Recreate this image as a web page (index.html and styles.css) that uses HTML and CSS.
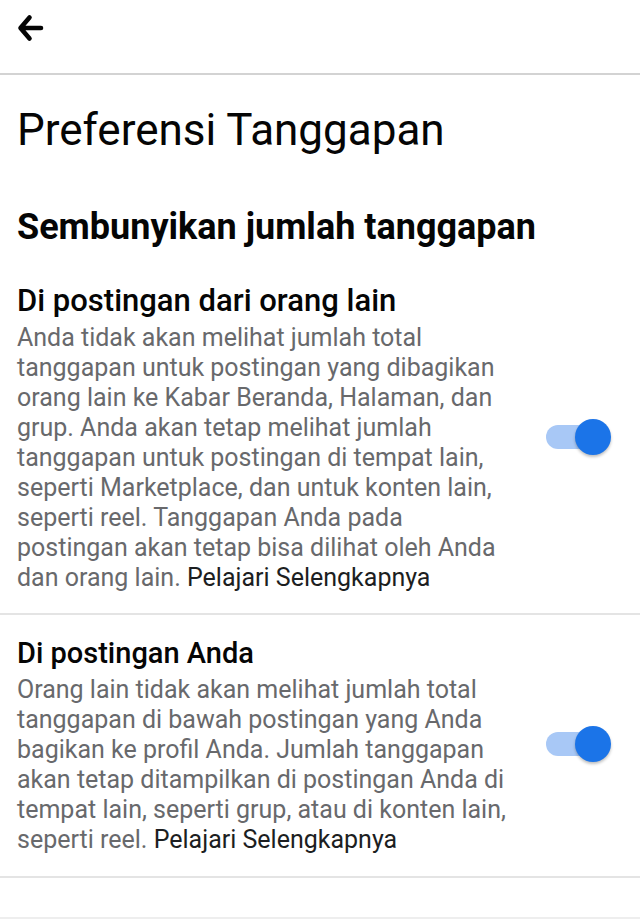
FILE: index.html
```html
<!DOCTYPE html>
<html lang="id">
<head>
<meta charset="utf-8">
<title>Preferensi Tanggapan</title>
<link rel="stylesheet" href="styles.css">
</head>
<body>
<header class="topbar">
  <button class="back" aria-label="Kembali">
    <svg width="30" height="30" viewBox="0 0 30 30"><path d="M25 14 H6 M13.5 3.5 L4.5 14 L13.5 24.5" fill="none" stroke="#050505" stroke-width="4.6" stroke-linecap="round" stroke-linejoin="round"/></svg>
  </button>
</header>
<main class="content">
  <h1 class="title">Preferensi Tanggapan</h1>
  <h2 class="subtitle">Sembunyikan jumlah tanggapan</h2>
  <section class="item item-first">
    <div class="item-text">
      <h3 class="item-head">Di postingan dari orang lain</h3>
      <p class="item-desc">Anda tidak akan melihat jumlah total<br>tanggapan untuk postingan yang dibagikan<br>orang lain ke Kabar Beranda, Halaman, dan<br>grup. Anda akan tetap melihat jumlah<br>tanggapan untuk postingan di tempat lain,<br>seperti Marketplace, dan untuk konten lain,<br>seperti reel. Tanggapan Anda pada<br>postingan akan tetap bisa dilihat oleh Anda<br>dan orang lain. <a class="more" href="#">Pelajari Selengkapnya</a></p>
    </div>
    <span class="toggle"><span class="knob"></span></span>
  </section>
  <section class="item item-second">
    <div class="item-text">
      <h3 class="item-head">Di postingan Anda</h3>
      <p class="item-desc">Orang lain tidak akan melihat jumlah total<br>tanggapan di bawah postingan yang Anda<br>bagikan ke profil Anda. Jumlah tanggapan<br>akan tetap ditampilkan di postingan Anda di<br>tempat lain, seperti grup, atau di konten lain,<br>seperti reel. <a class="more" href="#">Pelajari Selengkapnya</a></p>
    </div>
    <span class="toggle"><span class="knob"></span></span>
  </section>
  <div class="footer-space"></div>
</main>
</body>
</html>
```
FILE: styles.css
```css
* { box-sizing: border-box; }
html, body { margin: 0; padding: 0; background: #fff; }
body {
  font-family: Roboto, "Liberation Sans", Arial, sans-serif;
  color: #050505;
  width: 640px;
  height: 920px;
  overflow: hidden;
}
.topbar {
  height: 75px;
  border-bottom: 2px solid #d3d3d3;
  display: flex;
  align-items: flex-start;
  padding: 14px 0 0 16px;
}
.back {
  border: 0;
  background: none;
  padding: 0;
  width: 30px;
  height: 30px;
  display: block;
}
.back svg { display: block; }
.content { padding: 0; }
.title {
  margin: 0;
  padding: 27px 17px 0;
  font-size: 44px;
  line-height: 56px;
  font-weight: 400;
}
.subtitle {
  margin: 0;
  padding: 45px 17px 0;
  font-size: 36px;
  line-height: 48px;
  font-weight: 700;
}
.item {
  display: flex;
  align-items: center;
  justify-content: space-between;
  padding: 0 32px 0 17px;
  border-bottom: 2px solid #e4e4e4;
}
.item-first { padding-top: 30px; padding-bottom: 20px; }
.item-second { padding-top: 18px; padding-bottom: 21px; }
.item-head {
  margin: 0 0 2px;
  font-size: 29px;
  line-height: 40px;
  font-weight: 500;
  color: #050505;
}
.item-first .item-head { font-size: 31px; }
.item-desc {
  margin: 0;
  font-size: 25px;
  line-height: 30px;
  color: #68696c;
  white-space: nowrap;
}
.more {
  color: #1c1e21;
  text-decoration: none;
}
.toggle {
  position: relative;
  flex: none;
  width: 62px;
  height: 24px;
  border-radius: 12px;
  background: #a8c8f6;
}
.knob {
  position: absolute;
  right: -3px;
  top: -6px;
  width: 36px;
  height: 36px;
  border-radius: 50%;
  background: #1b74e8;
  box-shadow: 0 2px 3px rgba(0,0,0,0.25);
}
.footer-space {
  height: 41px;
  border-bottom: 2px solid #eeeeee;
}
```
